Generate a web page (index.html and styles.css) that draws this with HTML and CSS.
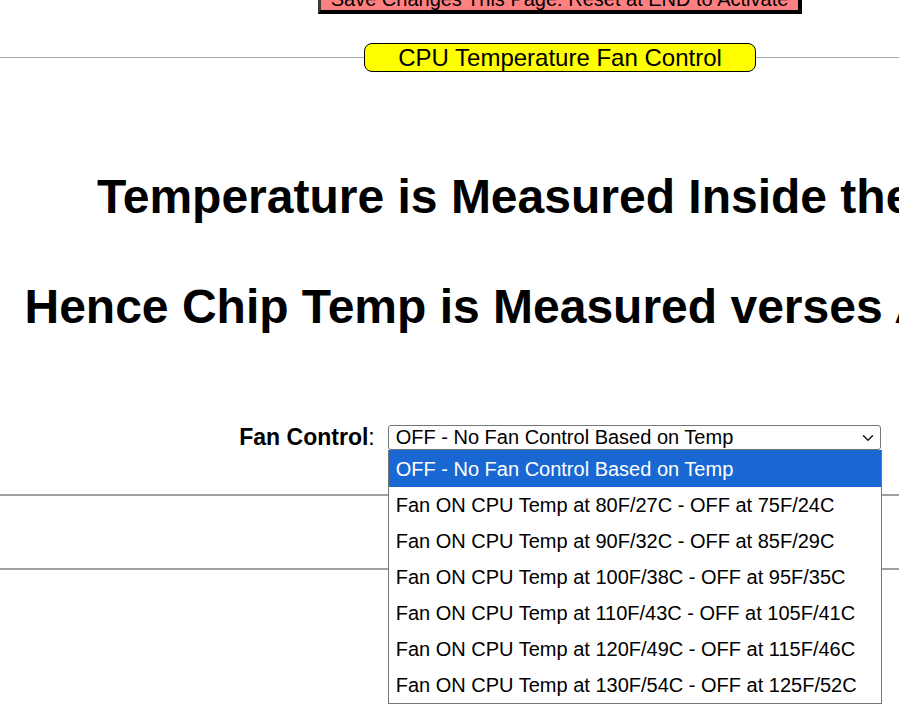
FILE: index.html
```html
<!DOCTYPE html>
<html lang="en">
<head>
<meta charset="utf-8">
<title>CPU Temperature Fan Control</title>
<link rel="stylesheet" href="styles.css">
</head>
<body>
<div class="page">
  <div class="top">
    <button class="save" type="button">Save Changes This Page: Reset at END to Activate</button>
  </div>

  <div class="section-title">
    <span class="rule"></span>
    <span class="legend">CPU Temperature Fan Control</span>
    <span class="rule"></span>
  </div>

  <h1 class="notes">
    <span class="note-line">Temperature is Measured Inside the CPU</span>
    <span class="note-line">Hence Chip Temp is Measured verses Ambient.</span>
  </h1>

  <div class="field">
    <label class="label"><b>Fan Control</b>:</label>
    <div class="combo">
      <div class="combo-value">
        <span>OFF - No Fan Control Based on Temp</span>
        <svg class="chevron" width="12" height="8" viewBox="0 0 12 8" aria-hidden="true">
          <path d="M1.5 1.8 L6 6.2 L10.5 1.8" fill="none" stroke="#1b1b1b" stroke-width="1.5" stroke-linecap="round" stroke-linejoin="round"/>
        </svg>
      </div>
      <ul class="listbox">
        <li class="option selected">OFF - No Fan Control Based on Temp</li>
        <li class="option">Fan ON CPU Temp at 80F/27C - OFF at 75F/24C</li>
        <li class="option">Fan ON CPU Temp at 90F/32C - OFF at 85F/29C</li>
        <li class="option">Fan ON CPU Temp at 100F/38C - OFF at 95F/35C</li>
        <li class="option">Fan ON CPU Temp at 110F/43C - OFF at 105F/41C</li>
        <li class="option">Fan ON CPU Temp at 120F/49C - OFF at 115F/46C</li>
        <li class="option">Fan ON CPU Temp at 130F/54C - OFF at 125F/52C</li>
      </ul>
    </div>
  </div>

  <hr class="divider">
  <div class="spacer"></div>
  <hr class="divider">
</div>
</body>
</html>
```

FILE: styles.css
```css
html {
  overflow: hidden;
  background: #fff;
}

body {
  margin: 0;
  font-family: "Liberation Sans", Arial, sans-serif;
  color: #000;
}

.page {
  width: 1120px;
  margin-top: -14px;
  padding-bottom: 200px;
}

.top {
  display: flex;
  justify-content: center;
}

.save {
  font-family: "Liberation Sans", Arial, sans-serif;
  font-size: 20px;
  line-height: 22px;
  color: #000;
  background: #ff8080;
  padding: 0 10px;
  margin: 0;
  border-style: solid;
  border-width: 2px 4px 4px 3px;
  border-color: #3a3a3a #000 #000 #3a3a3a;
  white-space: nowrap;
}

.section-title {
  display: flex;
  align-items: center;
  margin-top: 29px;
}

.rule {
  flex: 1;
  height: 1px;
  background: #a9a9a9;
}

.legend {
  width: 392px;
  box-sizing: border-box;
  text-align: center;
  font-size: 24px;
  line-height: 27px;
  background: #ffff00;
  border: 1px solid #000;
  border-radius: 8px;
}

.notes {
  margin: 97px 0 0;
  padding-left: 4px;
  display: flex;
  flex-direction: column;
  align-items: center;
  gap: 55px;
  font-size: 48px;
  line-height: 55px;
  font-weight: bold;
  white-space: nowrap;
}

.field {
  margin-top: 91px;
  display: flex;
  justify-content: center;
  align-items: center;
  gap: 13px;
  height: 25px;
}

.label {
  font-size: 23px;
  line-height: 25px;
}

.combo {
  position: relative;
  width: 493px;
}

.combo-value {
  box-sizing: border-box;
  height: 25px;
  display: flex;
  align-items: center;
  justify-content: space-between;
  padding: 0 6px 0 7px;
  border: 1px solid #767676;
  border-radius: 3px;
  background: #fff;
  font-size: 20px;
  line-height: 23px;
}

.chevron {
  display: block;
}

.listbox {
  position: absolute;
  top: 100%;
  left: 0;
  width: 494px;
  box-sizing: border-box;
  margin: 0;
  padding: 0;
  list-style: none;
  background: #fff;
  border: 1px solid #767676;
  border-top-color: #1967d2;
  z-index: 2;
}

.option {
  height: 36px;
  line-height: 36px;
  padding-left: 7px;
  font-size: 20px;
  white-space: nowrap;
}

.option.selected {
  background: #1967d2;
  color: #fff;
}

.divider {
  margin: 44px 0 0;
  height: 0;
  border: 0;
  border-top: 2px solid #a0a0a0;
}

.spacer {
  height: 72px;
}

.spacer + .divider {
  margin-top: 0;
}
```
